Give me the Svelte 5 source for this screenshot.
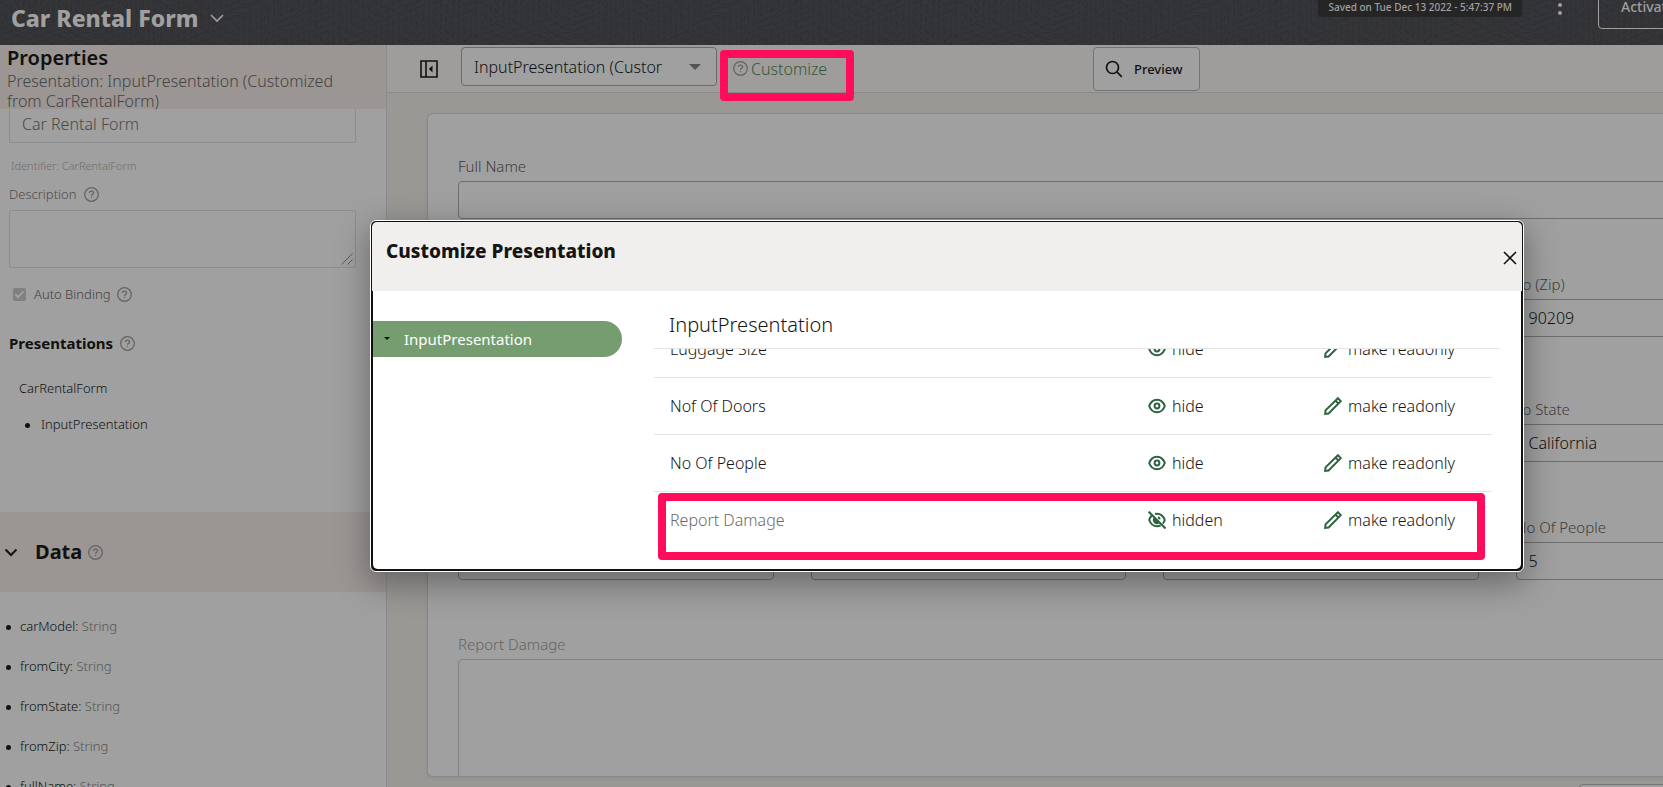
<script>
  const members = ['carModel', 'fromCity', 'fromState', 'fromZip', 'fullName'];
  const rows = [
    { name: 'Luggage Size', hidden: false },
    { name: 'Nof Of Doors', hidden: false },
    { name: 'No Of People', hidden: false },
    { name: 'Report Damage', hidden: true }
  ];
  const fieldRows = [
    [['From City', ''], ['From State', ''], ['From Zip', ''], ['To (Zip)', '90209']],
    [['Car Model', ''], ['Car Type', ''], ['To City', ''], ['To State', 'California']],
    [['Pickup', ''], ['Luggage Size', ''], ['Nof Of Doors', ''], ['No Of People', '5']]
  ];

  // Short strokes that follow a slowly turning direction give the header its woven texture.
  function weave() {
    let d = '';
    for (let j = 0; j < 12; j++) {
      for (let i = 0; i < 96; i++) {
        const x = i * 5 + (j % 2) * 2.5 + Math.sin(i * 7.3 + j * 3.1) * 1.4;
        const y = j * 4.2 + Math.cos(i * 4.7 + j * 2.3) * 1.4;
        const a = Math.sin(x / 38) * 1.5 + Math.cos(y / 17 + x / 61) * 1.2 + Math.sin(i * 3.7 + j * 5.9) * 0.35;
        const dx = Math.cos(a) * 1.8;
        const dy = Math.sin(a) * 1.8;
        d += `M${(x - dx).toFixed(1)} ${(y - dy).toFixed(1)}L${(x + dx).toFixed(1)} ${(y + dy).toFixed(1)}`;
      }
    }
    return d;
  }
  const texture = weave();
</script>

{#snippet help()}
  <svg class="help" viewBox="0 0 15 15" aria-hidden="true">
    <circle cx="7.5" cy="7.5" r="6.8" />
    <path d="M5.4 6.1c0-1.3.9-2 2.1-2s2.1.7 2.1 1.8c0 1.5-2.1 1.5-2.1 2.9" />
    <path d="M7.5 9.9v1.2" />
  </svg>
{/snippet}

{#snippet eye()}
  <svg class="ico" viewBox="0 0 18 18" aria-hidden="true">
    <path d="M1.2 9C2.7 4.7 5.6 2.7 9 2.7s6.3 2 7.8 6.3c-1.5 4.3-4.4 6.3-7.8 6.3S2.7 13.3 1.2 9z" />
    <circle cx="9" cy="9" r="2.4" />
  </svg>
{/snippet}

{#snippet eyeOff()}
  <svg class="ico" viewBox="0 0 18 18" aria-hidden="true">
    <path d="M3.6 4.8C2.6 5.8 1.7 7.2 1.2 9c1.5 4.200 4.400 6.300 7.800 6.300 1.300 0 2.500-.3 3.600-.9" />
    <path d="M7 2.900C7.600 2.800 8.300 2.700 9 2.700c3.400 0 6.300 2.100 7.800 6.300-.5 1.500-1.200 2.700-2 3.600" />
    <path d="M6.300 7.600A3 3 0 0 0 10.400 11.700zM10 6.300a3 3 0 0 1 1.800 1.900" />
    <path d="M.6.6l16.900 16.900" />
  </svg>
{/snippet}

{#snippet pencil()}
  <svg class="ico" viewBox="0 0 18 18" aria-hidden="true">
    <path d="M1.200 16.800l.3-3.400L13.900 1.200l2.900 2.900L4.600 16.500zM11.500 3.600l2.900 2.900" />
  </svg>
{/snippet}

<div class="page">
  <header class="top">
    <svg class="weave" aria-hidden="true">
      <defs>
        <pattern id="weave" width="480" height="50" patternUnits="userSpaceOnUse">
          <path d={texture} />
        </pattern>
      </defs>
      <rect width="100%" height="100%" fill="url(#weave)" stroke="none" />
    </svg>
    <button class="form-menu">
      Car Rental Form
      <svg viewBox="0 0 14 9" aria-hidden="true"><path d="M1 1l6 6 6-6" /></svg>
    </button>
    <div class="top-actions">
      <span class="saved">Saved on Tue Dec 13 2022 - 5:47:37 PM</span>
      <button class="kebab" aria-label="More actions">
        <svg viewBox="0 0 4 20" aria-hidden="true"><circle cx="2" cy="2" r="2" /><circle cx="2" cy="10" r="2" /><circle cx="2" cy="18" r="2" /></svg>
      </button>
      <button class="activate">Activate</button>
    </div>
  </header>

  <div class="columns">
    <aside>
      <div class="props-head">
        <h2>Properties</h2>
        <p>Presentation: InputPresentation (Customized from CarRentalForm)</p>
      </div>
      <div class="props">
        <input class="title-box" aria-label="Title" value="Car Rental Form" />
        <p class="ident">Identifier: CarRentalForm</p>
        <label class="desc-label" for="desc">Description {@render help()}</label>
        <div class="desc-wrap">
          <textarea id="desc"></textarea>
          <svg class="grip" viewBox="0 0 12 12" aria-hidden="true"><path d="M.5 11.5l11-11M6.5 11.5l5-5" /></svg>
        </div>
        <label class="check">
          <input type="checkbox" checked disabled />
          <span>Auto Binding</span>
          {@render help()}
        </label>
        <h3>Presentations {@render help()}</h3>
        <p class="tree-root">CarRentalForm</p>
        <ul class="tree"><li>InputPresentation</li></ul>
      </div>
      <div class="data-head">
        <svg class="chev" viewBox="0 0 14 9" aria-hidden="true"><path d="M1.5 1.5L7 7l5.5-5.5" /></svg>
        <h2>Data</h2>
        {@render help()}
      </div>
      <ul class="members">
        {#each members as m}
          <li>{m}: <span>String</span></li>
        {/each}
      </ul>
    </aside>

    <main>
      <div class="toolbar">
        <button class="collapse" aria-label="Collapse panel">
          <svg viewBox="0 0 18 18" aria-hidden="true">
            <path d="M1 1h16v16H1zM6 1v16" /><path class="fill" d="M12.5 5.5v7L8.8 9z" />
          </svg>
        </button>
        <div class="picker">
          <select aria-label="Presentation">
            <option>InputPresentation (Customized from CarRentalForm)</option>
          </select>
          <i></i>
        </div>
        <div class="customize">
          {@render help()}
          <a href="#customize">Customize</a>
        </div>
        <button class="preview">
          <svg viewBox="0 0 18 18" aria-hidden="true"><circle cx="7.5" cy="7.5" r="6" /><path d="M12 12l4.8 4.8" /></svg>
          Preview
        </button>
      </div>

      <div class="canvas">
        <form class="card">
          <div class="field">
            <label for="full">Full Name</label>
            <input id="full" />
          </div>
          {#each fieldRows as row, r}
            <div class="field-row">
              {#each row as [label, value], c}
                <div class="field">
                  <label for="f{r}-{c}">{label}</label>
                  <input id="f{r}-{c}" {value} />
                </div>
              {/each}
            </div>
          {/each}
          <div class="field faded">
            <label for="damage">Report Damage</label>
            <textarea id="damage"></textarea>
          </div>
        </form>
        <div class="form-foot"><button aria-label="Submit"></button></div>
      </div>
    </main>
  </div>

  <div class="backdrop">
    <div class="dialog" role="dialog" aria-labelledby="dlg-title">
      <div class="dlg-head">
        <h1 id="dlg-title">Customize Presentation</h1>
        <button aria-label="Close">
          <svg viewBox="0 0 14 14" aria-hidden="true"><path d="M1 1l12 12M13 1L1 13" /></svg>
        </button>
      </div>
      <div class="dlg-body">
        <nav>
          <button><i></i>InputPresentation</button>
        </nav>
        <section>
          <h2>InputPresentation</h2>
          <div class="scroller">
            <table>
              <tbody>
                {#each rows as row}
                  <tr class:off={row.hidden}>
                    <td class="name">{row.name}</td>
                    <td class="vis">
                      <button>
                        {#if row.hidden}{@render eyeOff()}hidden{:else}{@render eye()}hide{/if}
                      </button>
                    </td>
                    <td class="ro"><button>{@render pencil()}make readonly</button></td>
                  </tr>
                {/each}
              </tbody>
            </table>
            <div class="mark"></div>
          </div>
        </section>
      </div>
    </div>
  </div>
</div>

<style>
  :global(html) { overflow: hidden; }
  :global(body) { margin: 0; overflow: hidden; background: #a0a0a0; }
  .page, .page :is(button, input, select, textarea) {
    font-family: "Noto Sans", "Open Sans", sans-serif;
    font-weight: 300;
  }
  .page { position: relative; display: flex; flex-direction: column; min-width: 1894px; height: 100vh; overflow: hidden; font-size: 16px; line-height: 20px; color: #11110f; }
  .page *, .page *::after { box-sizing: border-box; }
  h1, h2, h3, p, ul { margin: 0; padding: 0; }
  ul { list-style: none; }
  button { margin: 0; padding: 0; border: 0; background: none; color: inherit; font-size: 16px; line-height: 20px; }
  svg { display: block; flex: none; fill: none; stroke: currentColor; }
  .help { width: 15px; height: 15px; color: #656565; stroke-width: 1.3; }

  .top { position: relative; flex: none; display: flex; justify-content: space-between; align-items: flex-start; height: 45px; background: #343539; color: #a1a09e; overflow: hidden; }
  .weave { position: absolute; inset: 0; width: 100%; height: 100%; stroke: #2f2f33; stroke-width: 1.3; stroke-linecap: round; }
  .page .form-menu { position: relative; display: flex; align-items: center; gap: 12px; padding: 3px 0 0 11px; font-size: 23px; line-height: 30px; font-weight: 800; }
  .form-menu svg { width: 14px; height: 9px; stroke-width: 1.6; }
  .top-actions { position: relative; display: flex; align-items: flex-start; padding-right: 196px; }
  .saved { margin-right: 36px; padding: 0 10px 3px; border-radius: 0 0 4px 4px; background: #252526; font-size: 10px; line-height: 14px; font-weight: 500; }
  .kebab { margin: -5px 36px 0 0; }
  .kebab svg { width: 4px; height: 20px; fill: currentColor; stroke: none; }
  .page .activate { height: 44px; margin-top: -15px; padding: 0 22px; border: 1px solid #a1a09e; border-radius: 4px; font-size: 14px; font-weight: 500; }

  .columns { flex: 1; display: flex; min-height: 0; }
  aside { flex: none; width: 387px; border-right: 1px solid #8b8c8e; overflow: hidden; background: #a0a0a0; }
  .props-head { position: relative; z-index: 1; height: 64px; padding: 1px 24px 0 7px; background: #9b9694; }
  .props-head h2 { margin-bottom: 1px; font-size: 20px; line-height: 24px; font-weight: 600; }
  .props-head p { color: #454442; }
  .props { height: 407px; padding: 0 30px 0 9px; font-size: 13px; }
  .title-box { display: block; width: 100%; height: 38px; margin-top: -4px; padding: 0 12px; border: 1px solid #8e8e8e; border-radius: 2px; background: none; color: #4a4947; font-size: 16px; }
  .ident { margin: 13px 0 8px 2px; font-size: 11px; color: #6f6e6d; }
  .desc-label, h3 { display: flex; align-items: center; gap: 7px; }
  .desc-label { color: #4d4c4a; margin-bottom: 6px; }
  .desc-wrap { position: relative; height: 58px; }
  .desc-wrap textarea { display: block; width: 100%; height: 58px; border: 1px solid #8e8e8e; border-radius: 2px; background: none; resize: none; }
  .grip { position: absolute; right: 3px; bottom: 3px; width: 12px; height: 12px; color: #595959; }
  .check { display: flex; align-items: center; margin: 16px 0 0 4px; color: #424140; }
  .check input { appearance: none; position: relative; width: 13px; height: 13px; margin: 0 8px 0 0; border-radius: 2px; background: #818181; }
  .check input::after { content: ""; position: absolute; left: 4px; top: 1px; width: 5px; height: 9px; border: solid #a0a0a0; border-width: 0 2px 2px 0; transform: rotate(45deg); }
  .check .help { margin-left: 7px; }
  h3 { margin-top: 29px; font-size: 15px; font-weight: 700; }
  .tree-root { margin: 25px 0 0 10px; }
  .tree { margin: 16px 0 0 16px; }
  .tree li { position: relative; padding-left: 16px; }
  .tree li::before, .members li::before { content: ""; position: absolute; left: 0; top: 9px; width: 5px; height: 5px; border-radius: 50%; background: #11110f; }
  .data-head { display: flex; align-items: center; height: 80px; padding-left: 4px; background: #9b9694; }
  .data-head .chev { width: 14px; height: 9px; margin-right: 17px; stroke-width: 2; }
  .data-head h2 { margin-right: 6px; font-size: 20px; line-height: 28px; font-weight: 700; }
  .members { padding: 24px 0 0 6px; font-size: 13px; }
  .members li { position: relative; height: 40px; padding-left: 14px; }
  .members span { color: #555453; }

  main { flex: 1; display: flex; flex-direction: column; min-width: 0; background: #9a9895; }
  .toolbar { flex: none; display: flex; align-items: center; height: 48px; padding-left: 33px; border-bottom: 1px solid #8b8a88; background: #9f9d9b; }
  .collapse svg { width: 18px; height: 18px; stroke-width: 1.6; }
  .fill { fill: currentColor; stroke: none; }
  .picker { position: relative; width: 256px; margin: -4px 16px 0 23px; }
  .picker select { display: block; appearance: none; width: 100%; height: 39px; padding: 0 54px 0 12px; border: 1px solid #6b6a69; border-radius: 4px; background: #a0a0a0; color: #11110f; font-size: 16px; }
  .picker i { position: absolute; right: 16px; top: 17px; border: 6px solid transparent; border-top-color: #555; border-bottom: 0; }
  .customize { position: relative; display: flex; align-items: center; gap: 3px; width: 360px; }
  .customize a { color: #34573a; text-decoration: none; font-size: 16px; }
  .customize::after { content: ""; position: absolute; left: -13px; top: -9px; width: 134px; height: 51px; border: 8px solid #ff0d5b; border-radius: 4px; }
  .page .preview { display: flex; align-items: center; gap: 11px; height: 44px; padding: 0 17px 0 11px; border: 1px solid #757473; border-radius: 4px; background: #a0a0a0; font-size: 13px; font-weight: 500; }
  .preview svg { width: 18px; height: 18px; stroke-width: 1.7; }

  .canvas { flex: 1; min-height: 0; padding: 20px 32px 0 40px; }
  .card { height: 664px; padding: 42px 30px 0; border: 1px solid #86898b; border-radius: 6px; background: #a0a0a0; overflow: hidden; box-shadow: 0 1px 3px #8d8b89; }
  .field label { display: block; height: 25px; color: #3e3d3b; font-size: 15px; line-height: 20px; }
  .field input, .field textarea { display: block; width: 100%; height: 38px; padding: 0 12px; border: 1px solid #6f6e6d; border-radius: 4px; background: none; color: #11110f; font-size: 16px; }
  .field textarea { height: 160px; resize: none; }
  .field-row { display: grid; grid-template-columns: repeat(4, 1fr); gap: 37px; margin-top: 55px; }
  .field-row + .field-row { margin-top: 62px; }
  .field-row + .field-row + .field-row { margin-top: 55px; }
  .faded { margin-top: 54px; }
  .field.faded label { color: #656463; }
  .field.faded textarea { border-color: #848382; }
  .form-foot { display: flex; justify-content: flex-end; padding-top: 7px; }
  .form-foot button { width: 283px; height: 40px; border: 1px solid #757473; border-radius: 4px; background: #a0a0a0; }

  .backdrop { position: absolute; inset: 0; display: flex; align-items: center; justify-content: center; padding-top: 4px; }
  .dialog { width: 1154px; border: 1px solid #fff; border-radius: 6px; background: #11110f; box-shadow: 0 10px 32px 2px rgba(0, 0, 0, 0.34); overflow: hidden; }
  .dlg-head { display: flex; justify-content: space-between; height: 69px; margin: 1px 1px 0; padding: 14px 5px 0 14px; border-radius: 5px 5px 0 0; background: #f0efed; }
  .dlg-head h1 { font-size: 19px; line-height: 30px; font-weight: 800; color: #161513; }
  .dlg-head button { align-self: flex-start; margin-top: 15px; }
  .dlg-head svg { width: 14px; height: 14px; stroke-width: 1.6; }
  .dlg-body { display: flex; margin: 0 2px 2px 1px; border-left: 1px solid #11110f; border-radius: 0 0 5px 5px; background: #fff; overflow: hidden; }
  .dlg-body nav { flex: none; width: 281px; padding-top: 30px; }
  .page .dlg-body nav button { display: flex; align-items: center; width: 249px; height: 36px; padding-left: 11px; border-radius: 0 18px 18px 0; background: #769d6f; color: #fff; font-weight: 400; font-size: 15px; }
  .dlg-body nav i { margin-right: 14px; border: 3px solid transparent; border-top-color: #11110f; border-bottom: 0; }
  .dlg-body section { flex: 1; min-width: 0; padding-right: 21px; }
  .dlg-body h2 { height: 58px; padding: 19px 0 0 15px; border-bottom: 1px solid #e4e4e3; font-size: 20px; line-height: 30px; font-weight: 300; color: #161513; }
  .scroller { position: relative; height: 220px; margin-right: 8px; overflow: hidden; }
  table { width: 100%; margin-top: -28px; border-collapse: collapse; table-layout: fixed; }
  td { height: 57px; padding: 0; border-bottom: 1px solid #e4e4e3; color: #161513; }
  tr:last-child td { border-bottom: 0; }
  td button { display: flex; align-items: center; gap: 6px; color: #161513; }
  .name { padding-left: 16px; }
  .off .name { color: #6b6a69; }
  .vis { width: 176px; }
  .ro { width: 168px; }
  .ico { width: 18px; height: 18px; color: #2d6340; stroke-width: 2; }
  .mark { position: absolute; left: 4px; right: 7px; top: 144px; height: 67px; border: 8px solid #ff0d5b; border-radius: 4px; }
</style>
